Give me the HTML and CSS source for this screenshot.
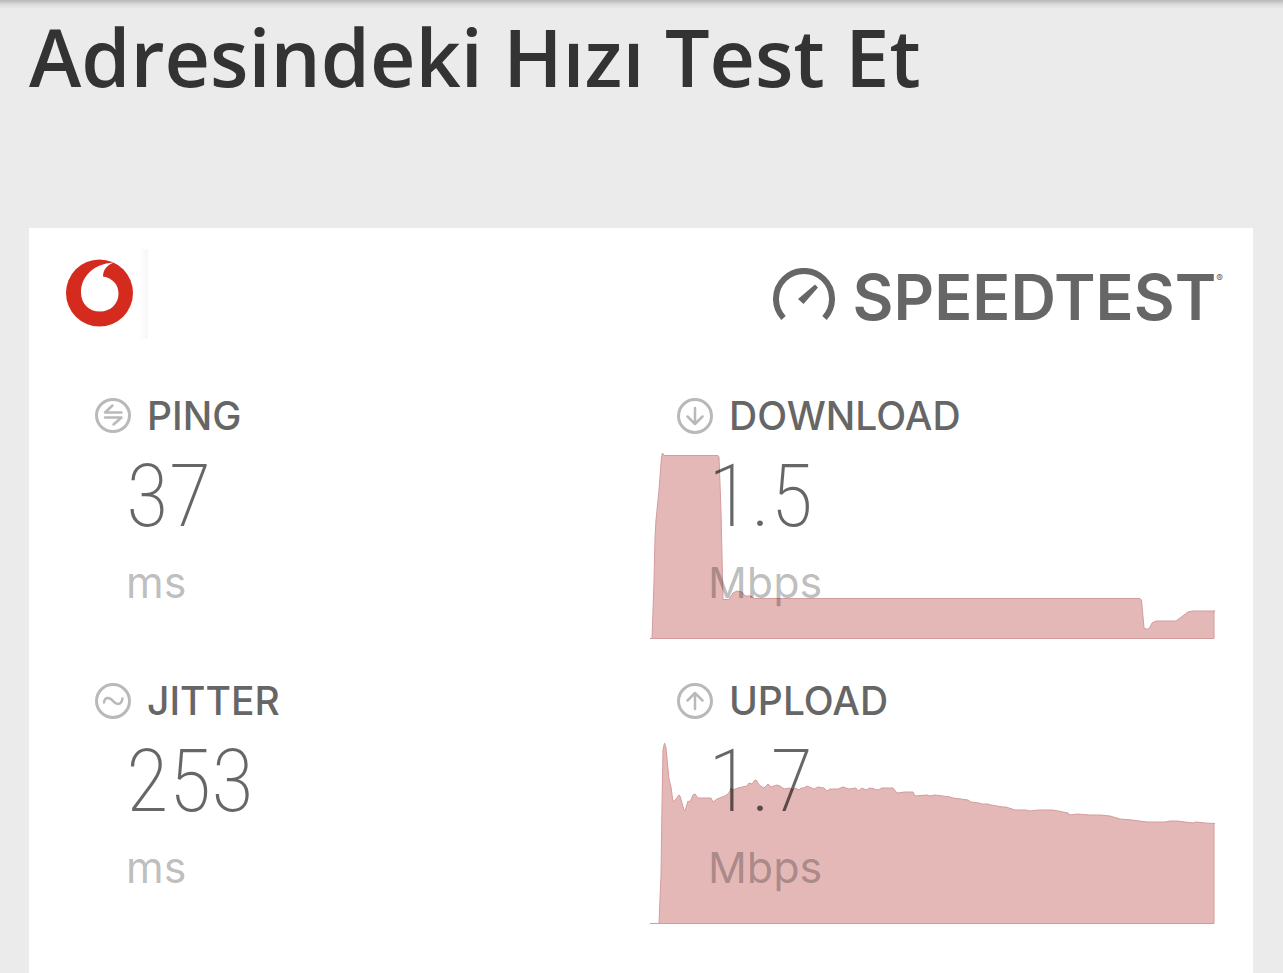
FILE: index.html
```html
<!DOCTYPE html>
<html lang="tr">
<head>
  <meta charset="UTF-8" />
  <meta name="viewport" content="width=device-width, initial-scale=1.0" />
  <title>Adresindeki Hızı Test Et</title>
  <link rel="stylesheet" href="styles.css">
</head>
<body>
  <div class="top-shadow"></div>
  <main class="page">
    <h1 class="title">Adresindeki Hızı Test Et</h1>

    <section class="card">
      <header class="card-header">
        <div class="operator">
          <svg class="operator-logo" viewBox="0 0 68 68" role="img" aria-label="Vodafone">
            <circle cx="33.5" cy="34" r="33.5" fill="#d52b1e" />
            <path d="M47 3.500C28 5 15 17 15 33.500C15 45 23 52.500 34 52.500C45 52.500 52.500 44.500 52.500 34.500C52.500 25.500 46.500 19 37 17.500C37 11 41 6 48 3.500Z" fill="#fff" />
          </svg>
        </div>
        <div class="brand">
          <svg class="gauge" viewBox="0 0 62 54" aria-hidden="true">
            <path d="M10.500 50A28 28 0 1 1 51.500 50" fill="none" stroke="#666" stroke-width="6" />
            <path d="M42 16.500L45 19.500L30.500 36L25 31Z" fill="#666" />
          </svg>
          <span class="brand-name">SPEEDTEST</span><sup class="brand-mark">®</sup>
        </div>
      </header>

      <div class="metrics">
        <article class="metric">
          <div class="reading">
            <h2 class="label">
              <svg class="icon" viewBox="0 0 36 36" aria-hidden="true">
                <ellipse cx="18" cy="17.500" rx="16.500" ry="16" />
                <path class="thin" d="M17.500 7.500L10 14.500H26.500M10 19.500H26.500L18.500 26.500" />
              </svg>
              PING
            </h2>
            <p class="value">37</p>
            <p class="unit">ms</p>
          </div>
        </article>

        <article class="metric">
          <svg class="chart" viewBox="0 0 565 190" preserveAspectRatio="none" aria-hidden="true">
            <path d="M0 189.500H2L4 132L5 89L6 71L9 41L11.500 8L12.500 4L14 6.500H68L69 8L71 62L73 150.500H79L83 144L87 142L92 143L95 147H101L103 149.500H490L491.500 151L494 179L496 180H499L502 174L506 172H526L538 163L543 162H565H564V189.500Z" />
          </svg>
          <div class="reading">
            <h2 class="label">
              <svg class="icon" viewBox="0 0 36 36" aria-hidden="true">
                <circle cx="18" cy="18" r="16.500" />
                <path class="thin" d="M18 10V26M10.500 18.500L18 26L25.500 18.500" />
              </svg>
              DOWNLOAD
            </h2>
            <p class="value">1.5</p>
            <p class="unit">Mbps</p>
          </div>
        </article>

        <article class="metric">
          <div class="reading">
            <h2 class="label">
              <svg class="icon" viewBox="0 0 36 36" aria-hidden="true">
                <circle cx="18" cy="18" r="16.500" />
                <path class="thin" d="M9 19.500C9.500 14 14.500 13.500 18 18S26.500 22 27.500 15.500" />
              </svg>
              JITTER
            </h2>
            <p class="value">253</p>
            <p class="unit">ms</p>
          </div>
        </article>

        <article class="metric">
          <svg class="chart" viewBox="0 0 565 190" preserveAspectRatio="none" aria-hidden="true">
            <path d="M0 189.500H9L11 141L12 71L13 16L14.500 9L16 14L19 45L21 53L23 68L26 65L29 61L30 62L34 76L35 77L38 67L40 68L43 61L45 60L48 64H61L63 68L67 65L75 62L79 59L81 54L83 56L88 54L97 52L99 49L102 50L105 46L107 47L109 51L114 54L118 50L121 53L127 51L130 52L134 55L140 54L143 56L145 54L149 56L151 54L154 54L157 52L164 55L168 53L174 54L177 57L180 55L188 55L193 53L199 55L206 54L208 57L212 54L216 56L220 54L228 56L232 54L243 54L247 59L255 58H263L265 62L277 61L280 62L285 61L300 63L303 64L318 66L321 68L329 69L332 70L338 70L341 71L353 73L356 73L365 76H376L380 77L389 76H403L418 79L420 81L427 80L440 81H450L460 82L470 85L482 86L497 88H515L520 87L527 87L543 89L546 88L555 89L565 89.500H564V189.500Z" />
          </svg>
          <div class="reading">
            <h2 class="label">
              <svg class="icon" viewBox="0 0 36 36" aria-hidden="true">
                <circle cx="18" cy="18" r="16.500" />
                <path class="thin" d="M18 26V10M10.500 17.500L18 10L25.500 17.500" />
              </svg>
              UPLOAD
            </h2>
            <p class="value">1.7</p>
            <p class="unit">Mbps</p>
          </div>
        </article>
      </div>
    </section>
  </main>
</body>
</html>
```
FILE: styles.css
```css
* {
  box-sizing: border-box;
}
body {
  margin: 0;
  background: #ebebeb;
  color: #333;
  font-family: Inter, "Liberation Sans", sans-serif;
}
h1, h2, p {
  margin: 0;
}
.top-shadow {
  position: absolute;
  top: 0;
  left: 0;
  right: 0;
  height: 9px;
  background: linear-gradient(#b8b8b8, #dcdcdc 50%, #ebebeb);
}
.page {
  display: flex;
  flex-direction: column;
  min-height: 100vh;
  padding: 17px 30px 0 29px;
}
.title {
  margin-bottom: 131px;
  font-family: "Open Sans", "Noto Sans", sans-serif;
  font-size: 79px;
  font-weight: 600;
  line-height: 80px;
}
.card {
  flex: 1;
  padding-bottom: 48px;
  background: #fff;
}
.card-header {
  display: flex;
  justify-content: space-between;
  padding: 21px 30px 0;
}
.operator {
  width: 89px;
  height: 90px;
  padding: 10px 7px;
  background: linear-gradient(to left, #f7f7f7, #fff 9px);
}
.operator-logo {
  display: block;
  width: 68px;
  height: 68px;
}
.brand {
  display: flex;
  align-items: flex-start;
  padding-top: 19px;
  color: #666;
}
.gauge {
  width: 62px;
  height: 54px;
  margin-right: 18px;
}
.brand-name {
  font-size: 63px;
  font-weight: 600;
  line-height: 58px;
}
.brand-mark {
  font-size: 10px;
  line-height: 20px;
}
.metrics {
  display: grid;
  grid-template-columns: 1fr 1fr;
  gap: 36px 17px;
  padding: 51px 38px 0 39px;
}
.metric {
  display: grid;
}
/* the reading sits on top of the chart in the same cell */
.reading, .chart {
  grid-area: 1 / 1;
}
.reading {
  padding: 8px 0 31px 27px;
}
.label {
  display: flex;
  align-items: center;
  gap: 16px;
  color: #666;
  font-size: 39px;
  font-weight: 500;
  line-height: 36px;
}
.icon {
  width: 36px;
  height: 36px;
  fill: none;
  stroke: #b9b9b9;
  stroke-width: 3;
  stroke-linecap: round;
  stroke-linejoin: round;
}
.icon .thin {
  stroke-width: 2.5;
}
.value {
  margin-top: 12px;
  padding-left: 31px;
  color: rgba(0, 0, 0, 0.6);
  font-family: "Roboto Condensed", "Liberation Sans Narrow", Roboto, sans-serif;
  font-size: 88px;
  font-weight: 200;
  line-height: 100px;
}
.unit {
  margin-top: 10px;
  padding-left: 31px;
  color: rgba(0, 0, 0, 0.27);
  font-size: 43px;
  line-height: 52px;
}
.chart {
  align-self: end;
  width: 100%;
  height: 190px;
  fill: #e5b8b8;
  stroke: #d39c9c;
  stroke-width: 1;
}
```
